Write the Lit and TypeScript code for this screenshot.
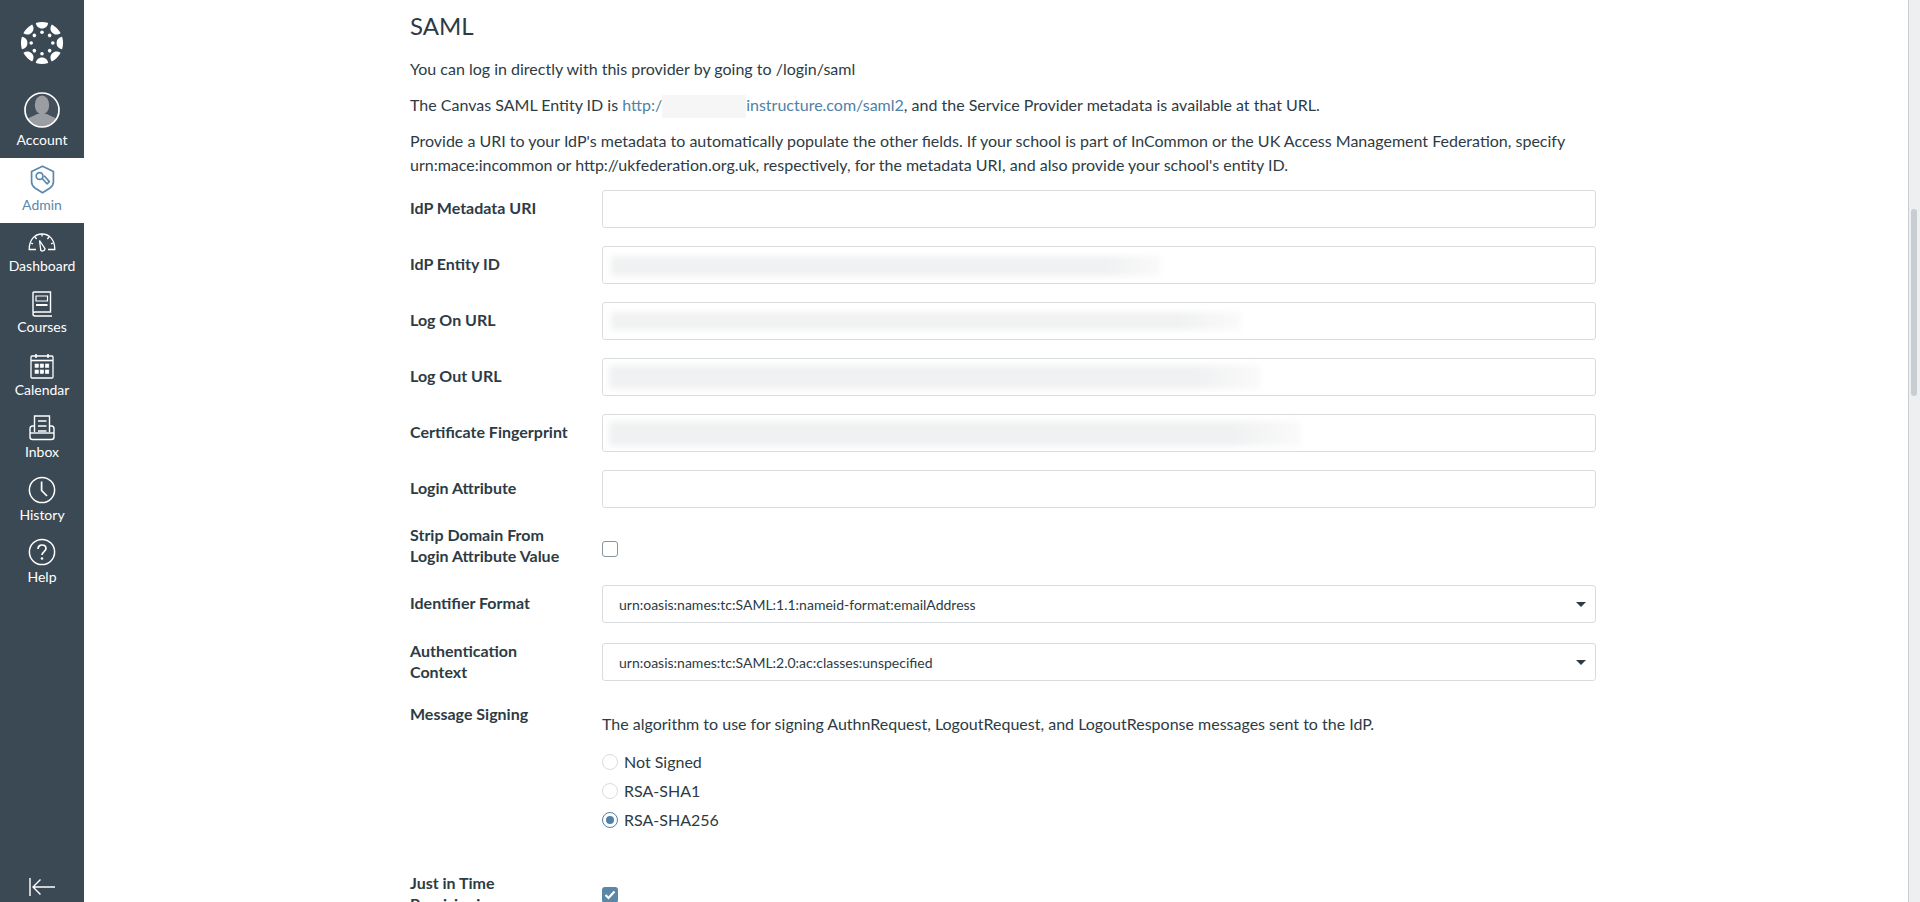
import { LitElement, html, css, svg } from "lit";
import { customElement } from "lit/decorators.js";

const logo = svg`<svg width="44" height="44" viewBox="-22 -22 44 44" fill="#fff">
  ${[0, 45, 90, 135, 180, 225, 270, 315].map(
    (a) => svg`<g transform="rotate(${a})">
      <path d="M-6.2 -20.1 A21 21 0 0 1 6.2 -20.1 C5.6 -17 3.6 -14.6 0 -14.6 C-3.6 -14.6 -5.6 -17 -6.2 -20.1Z"/>
      <circle cx="0" cy="-10.8" r="1.8"/></g>`
  )}
</svg>`;

const avatar = svg`<svg width="38" height="38" viewBox="0 0 38 38">
  <defs><clipPath id="c"><circle cx="19" cy="19" r="17"/></clipPath></defs>
  <circle cx="19" cy="19" r="17" fill="#434f5b"/>
  <g clip-path="url(#c)" fill="#9a9da1">
    <ellipse cx="19" cy="14" rx="7.2" ry="9.5"/>
    <path d="M1 38 V31 C3 27 9 26 14 23 L24 23 C29 26 35 27 37 31 V38Z"/>
  </g>
  <circle cx="19" cy="19" r="17" fill="none" stroke="#fff" stroke-width="1.7"/>
</svg>`;

const admin = svg`<svg width="25" height="29" viewBox="0 0 25 29" fill="none" stroke="#5a89ad" stroke-width="1.7" stroke-linejoin="round">
  <path d="M12.5 1.2 L23.4 6.5 V17 C23.4 20 22 21.5 20 23 L12.5 27.8 L5 23 C3 21.5 1.6 20 1.6 17 V6.5Z"/>
  <circle cx="9.6" cy="11" r="3.4"/>
  <path d="M12 13.3 L17 18.8 L19.4 16.6 L14.2 10.8"/>
</svg>`;

const dash = svg`<svg width="28" height="20" viewBox="0 0 28 20" fill="none" stroke="#fff" stroke-width="1.3">
  <path d="M8 17.5 H1.2 C1.2 8 6.5 2 14 2 C21.5 2 26.8 8 26.8 17.5 H20"/>
  <path d="M11.5 8.5 L17 16.6 A2.6 2.6 0 0 1 12.8 18.4Z" />
  <path d="M14 2v2.5M7 5l1.6 2M21 5l-1.6 2M3 11l2 .8M25 11l-2 .8" />
</svg>`;

const book = svg`<svg width="22" height="26" viewBox="0 0 22 26" fill="none" stroke="#fff" stroke-width="1.4">
  <path d="M2 21.5 V2 Q2 1 3 1 H19.5 V21 H4 Q2 21 2 23 Q2 25 4 25 H21" />
  <path d="M5 5 H16.5 V10 H5Z" stroke-width="1.2"/>
  <path d="M5 14 H16.5" stroke-width="2"/>
</svg>`;

const cal = svg`<svg width="24" height="26" viewBox="0 0 24 26" fill="none" stroke="#fff" stroke-width="1.3">
  <rect x="1" y="3" width="22" height="22" rx="1"/>
  <path d="M1 7.5 H23" stroke-width="1.6"/>
  <path d="M6 1v4M18 1v4" stroke-width="1.6"/>
  ${[5, 10.2, 15.4].flatMap((x) => [11, 17].map((y) => svg`<rect x="${x}" y="${y}" width="3.4" height="3.4" fill="#fff" stroke-width=".6"/>`))}
</svg>`;

const inbox = svg`<svg width="28" height="26" viewBox="0 0 28 26" fill="none" stroke="#fff" stroke-width="1.4">
  <path d="M6.5 17 V1 H21.5 V17"/>
  <path d="M10 6 H18.5 M10 11 H18.5 M10 16 H18.5" stroke-width="1.5"/>
  <path d="M6.5 11 H4.5 Q2 11 2 14 V22 Q2 24.5 4.5 24.5 H23.5 Q26 24.5 26 22 V14 Q26 11 23.5 11 H21.5"/>
  <path d="M2 18 H26"/>
</svg>`;

const clock = svg`<svg width="28" height="28" viewBox="0 0 28 28" fill="none" stroke="#fff" stroke-width="1.5">
  <circle cx="14" cy="14" r="12.6"/>
  <path d="M13.6 5.5 V14.5 L19 20" stroke-width="1.7"/>
</svg>`;

const help = svg`<svg width="28" height="28" viewBox="0 0 28 28" fill="none" stroke="#fff" stroke-width="1.5">
  <circle cx="14" cy="14" r="12.6"/>
  <path d="M10 11 C10 8.5 11.8 7 14 7 C16.4 7 18 8.6 18 10.6 C18 13.6 14 13.6 14 17" stroke-width="1.7"/>
  <circle cx="14" cy="20.5" r="1.3" fill="#fff" stroke="none"/>
</svg>`;

const collapse = svg`<svg width="28" height="20" viewBox="0 0 28 20" fill="none" stroke="#fff" stroke-width="1.4">
  <path d="M2 1 V19" stroke="#d8dbde" stroke-width="1.8"/>
  <path d="M12.5 2.5 L5 10 L12.5 17.5 M5 10 H27"/>
</svg>`;

interface Field { label: string; blur?: [number, number, number, number]; }

const fields: Field[] = [
  { label: "IdP Metadata URI" },
  { label: "IdP Entity ID", blur: [8, 9, 550, 20] },
  { label: "Log On URL", blur: [8, 9, 630, 18] },
  { label: "Log Out URL", blur: [6, 6, 652, 24] },
  { label: "Certificate Fingerprint", blur: [6, 6, 692, 25] },
  { label: "Login Attribute" },
];

@customElement("app-root")
export class AppRoot extends LitElement {
  static styles = css`
    :host {
      display: flex;
      width: 1920px;
      height: 902px;
      overflow: hidden;
      background: #fff;
      color: #2d3b45;
      font-family: Lato, "Liberation Sans", sans-serif;
      font-size: 16px;
    }
    .nav {
      width: 84px;
      flex: none;
      background: #3b4955;
      display: flex;
      flex-direction: column;
      align-items: stretch;
      color: #fff;
      font-size: 14px;
    }
    .logo { height: 84px; display: flex; justify-content: center; padding-top: 21px; box-sizing: border-box; }
    .item { height: 62px; padding-top: 5px; box-sizing: border-box; display: flex; flex-direction: column; align-items: center; }
    .ico { height: 28px; display: flex; align-items: center; justify-content: center; }
    .lbl { line-height: 18px; margin-top: 1px; }
    .account { height: 74px; padding-top: 7px; }
    .account .ico { height: 38px; }
    .account .lbl { margin-top: 2px; }
    .admin { height: 65px; background: #fff; color: #5a89ad; padding-top: 7px; }
    .admin .lbl { margin-top: 3px; }
    .tight .lbl { margin-top: 0; }
    .loose .lbl { margin-top: 2px; }
    .collapse { margin-top: auto; height: 40px; display: flex; justify-content: center; padding-top: 15px; box-sizing: border-box; }
    main { flex: 1; padding: 9px 0 0 326px; min-width: 0; }
    h2 { margin: 0 0 14px; font-size: 24px; font-weight: 400; line-height: 34px; }
    p { margin: 0 0 12px; line-height: 24px; width: 1186px; }
    .p2 { margin-bottom: 11px; }
    .p3 { margin-bottom: 13px; }
    a { color: #4f81a6; text-decoration: none; }
    .redact { display: inline-block; width: 84px; height: 23px; background: #f6f6f7; vertical-align: middle; }
    .row { display: flex; align-items: center; margin-bottom: 18px; width: 1186px; }
    .row label, .lab { width: 192px; flex: none; font-weight: 700; line-height: 21px; font-size: 16px; }
    .row label { margin-top: -4px; }
    .row.auth label { margin-top: -2px; }
    .input {
      position: relative;
      flex: 1;
      height: 38px;
      box-sizing: border-box;
      border: 1px solid #d9dcde;
      border-radius: 3px;
      background: #fff;
      overflow: hidden;
      display: flex;
      align-items: center;
      font-size: 14px;
      padding-left: 16px;
    }
    .blur {
      position: absolute;
      background: linear-gradient(90deg, #f0f1f2 90%, #fafafa);
      filter: blur(3px);
    }
    .caret {
      position: absolute;
      right: 9px;
      top: 16px;
      width: 0;
      height: 0;
      border-left: 5px solid transparent;
      border-right: 5px solid transparent;
      border-top: 5px solid #2d3b45;
    }
    .check {
      width: 14px;
      height: 14px;
      margin-top: 4px;
      border: 1px solid #8a949c;
      border-radius: 3px;
      box-sizing: content-box;
    }
    .strip { height: 42px; margin-bottom: 17px; }
    .auth { height: 42px; margin-bottom: 22px; }
    .signing { align-items: flex-start; margin-bottom: 38px; }
    .signing .lab { margin-top: -2px; }
    .signing .body { flex: 1; padding-top: 7px; }
    .signing p { width: auto; margin-bottom: 11px; }
    .radio { display: flex; align-items: center; height: 29px; gap: 6px; }
    .dot { width: 14px; height: 14px; border: 1px solid #d9dcde; border-radius: 50%; display: flex; align-items: center; justify-content: center; }
    .dot.on { border-color: #4f81a6; border-width: 1.5px; }
    .dot.on::after { content: ""; width: 8px; height: 8px; border-radius: 50%; background: #4f81a6; }
    .jit { align-items: flex-start; }
    .tick { width: 16px; height: 16px; border-radius: 3px; background: #5a87a8; margin-top: 15px; display: flex; align-items: center; justify-content: center; }
    .bar {
      width: 11px;
      flex: none;
      background: #eeeff1;
      border-left: 1px solid #c9ccd0;
    }
    .thumb { width: 6px; height: 187px; margin: 209px 0 0 2px; background: #c8cdd1; border-radius: 3px; }
  `;

  render() {
    return html`
      <nav class="nav">
        <div class="logo">${logo}</div>
        <div class="item account"><div class="ico">${avatar}</div><div class="lbl">Account</div></div>
        <div class="item admin"><div class="ico">${admin}</div><div class="lbl">Admin</div></div>
        <div class="item"><div class="ico">${dash}</div><div class="lbl">Dashboard</div></div>
        <div class="item tight"><div class="ico">${book}</div><div class="lbl">Courses</div></div>
        <div class="item"><div class="ico">${cal}</div><div class="lbl">Calendar</div></div>
        <div class="item"><div class="ico">${inbox}</div><div class="lbl">Inbox</div></div>
        <div class="item loose"><div class="ico">${clock}</div><div class="lbl">History</div></div>
        <div class="item loose"><div class="ico">${help}</div><div class="lbl">Help</div></div>
        <div class="collapse">${collapse}</div>
      </nav>
      <main>
        <h2>SAML</h2>
        <p>You can log in directly with this provider by going to /login/saml</p>
        <p class="p2">The Canvas SAML Entity ID is <a href="#">http:/<span class="redact"></span>instructure.com/saml2</a>, and the Service Provider metadata is available at that URL.</p>
        <p class="p3">Provide a URI to your IdP's metadata to automatically populate the other fields. If your school is part of InCommon or the UK Access Management Federation, specify urn:mace:incommon or http://ukfederation.org.uk, respectively, for the metadata URI, and also provide your school's entity ID.</p>
        ${fields.map(
          (f) => html`<div class="row"><label>${f.label}</label><div class="input">${f.blur
            ? html`<div class="blur" style="left:${f.blur[0]}px;top:${f.blur[1]}px;width:${f.blur[2]}px;height:${f.blur[3]}px"></div>`
            : ""}</div></div>`
        )}
        <div class="row strip"><label>Strip Domain From<br />Login Attribute Value</label><div class="check"></div></div>
        <div class="row"><label>Identifier Format</label><div class="input">urn:oasis:names:tc:SAML:1.1:nameid-format:emailAddress<div class="caret"></div></div></div>
        <div class="row auth"><label>Authentication<br />Context</label><div class="input">urn:oasis:names:tc:SAML:2.0:ac:classes:unspecified<div class="caret"></div></div></div>
        <div class="row signing">
          <div class="lab">Message Signing</div>
          <div class="body">
            <p>The algorithm to use for signing AuthnRequest, LogoutRequest, and LogoutResponse messages sent to the IdP.</p>
            <div class="radio"><span class="dot"></span>Not Signed</div>
            <div class="radio"><span class="dot"></span>RSA-SHA1</div>
            <div class="radio"><span class="dot on"></span>RSA-SHA256</div>
          </div>
        </div>
        <div class="row jit">
          <div class="lab">Just in Time<br />Provisioning</div>
          <div class="tick"><svg width="12" height="10" viewBox="0 0 12 10" fill="none" stroke="#fff" stroke-width="2.2"><path d="M1.5 5 L4.5 8 L10.5 1.5"/></svg></div>
        </div>
      </main>
      <div class="bar"><div class="thumb"></div></div>
    `;
  }
}
